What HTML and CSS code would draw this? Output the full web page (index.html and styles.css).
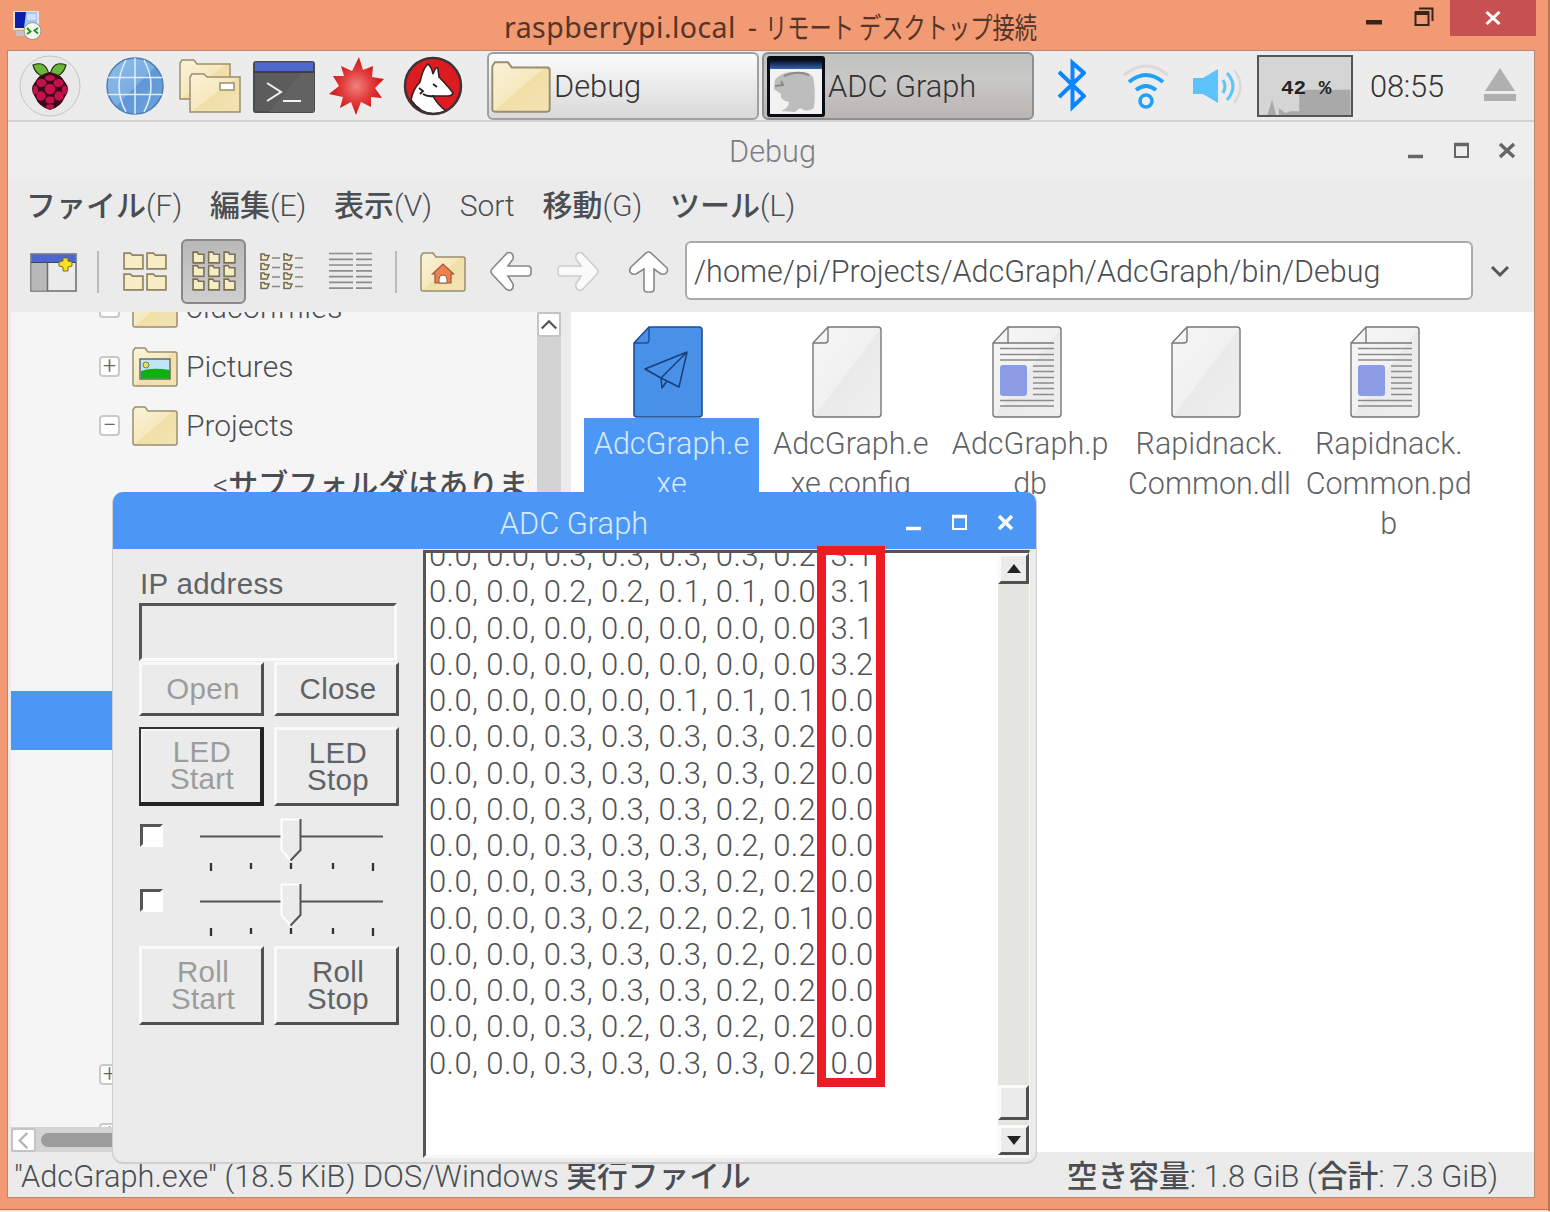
FILE: index.html
```html
<!DOCTYPE html>
<html lang="ja">
<head>
<meta charset="utf-8">
<title>raspberrypi.local - リモート デスクトップ接続</title>
<link rel="stylesheet" href="styles.css">
</head>
<body>
<svg class="defs" width="0" height="0">
  <defs>
    <linearGradient id="fold" x1="0" y1="0" x2="1" y2="1"><stop offset="0" stop-color="#faf3d8"/><stop offset=".5" stop-color="#f6e9bf"/><stop offset=".52" stop-color="#f1dfa6"/><stop offset="1" stop-color="#f3e4b4"/></linearGradient>
    <linearGradient id="paper" x1="0" y1="0" x2="1" y2="1"><stop offset="0" stop-color="#f6f6f6"/><stop offset=".5" stop-color="#f1f1f1"/><stop offset=".51" stop-color="#eaeaea"/><stop offset="1" stop-color="#efefef"/></linearGradient>
    <radialGradient id="burst"><stop offset="0" stop-color="#f08080"/><stop offset=".55" stop-color="#e23a3a"/><stop offset="1" stop-color="#d01414"/></radialGradient>
    <linearGradient id="sky" x1="0" y1="0" x2="1" y2="1"><stop offset="0" stop-color="#8fbdea"/><stop offset=".5" stop-color="#7bade2"/><stop offset=".52" stop-color="#5f97d6"/><stop offset="1" stop-color="#6fa3dc"/></linearGradient>
    <symbol id="folder" viewBox="0 0 46 40" preserveAspectRatio="none"><path d="M1 37V4L3 1H13L16 5H43Q45 5 45 7V37Q45 39 43 39H3Q1 39 1 37Z" fill="url(#fold)" stroke="#9a8e72" stroke-width="1.5"/></symbol>
    <symbol id="mini" viewBox="0 0 20 17" preserveAspectRatio="none"><path d="M1 16V1H7L9 3H19V16Z" fill="#f8ecc4" stroke="#8f8465" stroke-width="1.6"/></symbol>
    <symbol id="tiny" viewBox="0 0 12 12" preserveAspectRatio="none"><path d="M1 11V1H5L6 3H11V11Z" fill="#f8ecc4" stroke="#7a7057" stroke-width="1.5"/></symbol>
    <symbol id="micro" viewBox="0 0 10 8"><path d="M1 7V1H4L5 2.5H9L7 7Z" fill="#f8ecc4" stroke="#6f6755" stroke-width="1.5"/></symbol>
    <symbol id="page" viewBox="0 0 70 92"><path d="M1 17L16 1H66Q69 1 69 4V88Q69 91 66 91H4Q1 91 1 88Z" fill="url(#paper)" stroke="#777" stroke-width="1.4"/><path d="M1 17H13Q16 17 16 14V1" fill="none" stroke="#777" stroke-width="1.4"/></symbol>
    <symbol id="doc" viewBox="0 0 70 92"><path d="M1 17L16 1H66Q69 1 69 4V88Q69 91 66 91H4Q1 91 1 88Z" fill="url(#paper)" stroke="#777" stroke-width="1.4"/><path d="M1 17H62M16 17V1" fill="none" stroke="#777" stroke-width="1.4"/><path d="M8 22.500H62M8 28.500H62M8 34H62M41 40H62M41 45.500H62M41 51.500H62M41 57H62M41 62.500H62M41 68.500H62M8 74.500H62M8 80H62" stroke="#8b8b8b" stroke-width="1.7"/><rect x="8" y="39" width="27" height="31" rx="3" fill="#8c9ce4"/></symbol>
    <symbol id="runner" viewBox="0 0 70 92"><path d="M1 17L16 1H66Q69 1 69 4V88Q69 91 66 91H4Q1 91 1 88Z" fill="#4890e8" stroke="#1c4f92" stroke-width="1.6"/><path d="M1 17H13Q16 17 16 14V1" fill="none" stroke="#1c4f92" stroke-width="1.4"/><path d="M12 43L54 26L46 61L28 52ZM54 26L28 52L29 62L34 55" fill="none" stroke="#173f78" stroke-width="1.5" stroke-linejoin="round"/></symbol>
    <symbol id="arrow" viewBox="0 0 42 42"><path d="M2 18L17 2Q19 1 21 2Q24 4 23 8L18 15H38Q41 15 41 18V22Q41 25 38 25H18L23 33Q24 37 21 39Q19 40 16 38L2 23Q0 20 2 18Z" fill="#fff" stroke="currentColor" stroke-width="1.6"/></symbol>
    <symbol id="track" viewBox="0 0 200 65"><path d="M10 20.500H193" stroke="#555" stroke-width="2"/><path d="M91 3H111V34L101 45L91 34Z" fill="#ebebeb"/><path d="M91.500 34V3.500H111M91.500 34L101 45" fill="none" stroke="#fff" stroke-width="2"/><path d="M110.500 3V34L100.500 44.500" fill="none" stroke="#555" stroke-width="2"/><path d="M21 47V55M61 47V53M101 47V53M143 47V53M183 47V55" stroke="#333" stroke-width="2.300"/></symbol>
  </defs>
</svg>

<header class="rdp-title">
  <svg class="rdp-icon" viewBox="0 0 30 30"><rect x="1" y="0" width="26" height="19" rx="1" fill="#e6e2dc"/><rect x="3" y="1" width="22" height="16" fill="#a9c4f4"/><path d="M3 1H14L12 17H3Z" fill="#0a1fb0"/><path d="M15 3H24V9H15Z" fill="#cfe0ff"/><path d="M4 20H14V25H4Z" fill="#c7c3c9"/><circle cx="20.500" cy="20" r="8.500" fill="#f4f7f1" stroke="#8d9a86"/><path d="M15 17L18.500 20.500L15 23M26 17L22.500 19.500L26 22.500" fill="none" stroke="#2b8f22" stroke-width="2"/></svg>
  <h1><span class="t-en">raspberrypi.local -</span><span class="t-jp">リモート デスクトップ接続</span></h1>
  <div class="rdp-buttons">
    <svg class="rdp-min" viewBox="0 0 16 5"><rect width="16" height="4.500" fill="#3a231b"/></svg>
    <svg class="rdp-max" viewBox="0 0 20 20"><path d="M5 1.500H18.500V14" fill="none" stroke="#3a231b" stroke-width="2"/><path d="M1.500 5.500H14.500V18H1.500Z" fill="none" stroke="#3a231b" stroke-width="2"/><path d="M1 6H15" stroke="#3a231b" stroke-width="4"/></svg>
    <div class="rdp-close"><svg viewBox="0 0 16 14"><path d="M1.500 1L14.500 13M14.500 1L1.500 13" stroke="#fff" stroke-width="3"/></svg></div>
  </div>
</header>

<main class="desktop">
  <nav class="taskbar">
    <svg class="i-pi" viewBox="0 0 62 62"><circle cx="31" cy="31" r="30" fill="#e9e9e9" stroke="#c5c5c5"/><g stroke="#26330f" stroke-width="1.200" fill="#6cb63a"><path d="M30 20Q18 24 14 10Q27 5 30 20Z"/><path d="M31 20Q43 24 47 10Q34 5 31 20Z"/></g><path d="M31 17Q42 19 46 27Q52 34 46 42Q42 52 31 55Q20 52 16 42Q10 34 16 27Q20 19 31 17Z" fill="#3b0a1a"/><g fill="#c3124a"><ellipse cx="31" cy="23" rx="5" ry="3"/><ellipse cx="22.500" cy="28" rx="5" ry="4"/><ellipse cx="39.500" cy="28" rx="5" ry="4"/><circle cx="31" cy="34" r="5.200"/><ellipse cx="16.500" cy="35" rx="2.500" ry="4.500"/><ellipse cx="45.500" cy="35" rx="2.500" ry="4.500"/><circle cx="22" cy="41" r="4.700"/><circle cx="40" cy="41" r="4.700"/><ellipse cx="31" cy="45" rx="4.500" ry="3.500"/><ellipse cx="31" cy="51.500" rx="4" ry="2.300"/></g></svg>
    <svg class="i-web" viewBox="0 0 58 58"><circle cx="29" cy="29" r="28" fill="url(#sky)" stroke="#4a7fb8" stroke-width="1.500"/><path d="M29 1V57M2 20.500H56M2 37.500H56M20 3Q6 29 20 55M38 3Q52 29 38 55" fill="none" stroke="#dfeeff" stroke-width="1.500"/></svg>
    <svg class="i-files" viewBox="0 0 62 54"><path d="M1 40V4L3 1H15L18 5H51V40Z" fill="url(#fold)" stroke="#9a8e72" stroke-width="1.500"/><path d="M11 53V18L13 15H25L28 18H61V53Z" fill="url(#fold)" stroke="#9a8e72" stroke-width="1.500"/><rect x="41" y="24" width="14" height="7" fill="#fff" stroke="#9a8e72" stroke-width="1.500"/></svg>
    <svg class="i-term" viewBox="0 0 62 52"><rect x="1" y="1" width="60" height="50" rx="2" fill="#5c5c5c" stroke="#4a4a52" stroke-width="2"/><path d="M61 10H50L16 51H61Z" fill="#626262"/><rect x="2" y="1.500" width="58" height="9" fill="#4e68cc"/><path d="M1 11H61" stroke="#333" stroke-width="1.500"/><path d="M14 22L28 31L14 40M30 40H48" fill="none" stroke="#f2f2f2" stroke-width="2"/></svg>
    <svg class="i-burst" viewBox="0 0 56 58"><path d="M30 0L34 13L44 9L43 20L55 22L46 31L53 41L42 40L42 50L32 45L27 58L22 45L11 51L14 40L0 37L10 29L4 19L15 19L12 9L23 14Z" fill="url(#burst)"/></svg>
    <svg class="i-wolf" viewBox="0 0 60 60"><circle cx="30" cy="30" r="28" fill="#dd1c22"/><path d="M8 44Q10 33 17 26Q20 12 25 8Q29 12 30 18Q33 9 35 13L36 21Q40 25 47 33L50 37Q49 40 45 40L30 40Q34 48 43 55Q22 64 8 44Z" fill="#fff" stroke="#332022" stroke-width="1.600"/><path d="M16 32L20 35L17 38M30 28L34 31M20 38Q24 41 31 40" fill="none" stroke="#222" stroke-width="1.800"/><circle cx="30" cy="30" r="28" fill="none" stroke="#3c3335" stroke-width="2.500"/></svg>
    <div class="task"><svg class="task-folder"><use href="#folder"/></svg><span>Debug</span></div>
    <div class="task task-on"><svg class="task-app" viewBox="0 0 58 61"><defs><linearGradient id="bar" x1="0" y1="0" x2="0" y2="1"><stop offset="0" stop-color="#050a18"/><stop offset="1" stop-color="#3563b4"/></linearGradient></defs><rect width="58" height="61" rx="3" fill="#080c14"/><rect x="3" y="4" width="52" height="9" fill="url(#bar)"/><rect x="3" y="13" width="52" height="45" fill="#f2f2f2"/><path d="M8 24Q14 16 26 16Q42 15 46 21Q49 34 47 52Q40 57 33 52L28 56L14 55Q22 52 22 46Q12 44 14 38L7 33Z" fill="#bdbdbd"/><path d="M17 20Q30 14 42 19M8 30L16 29L14 25" stroke="#8a8a8a" stroke-width="2" fill="none"/></svg><span>ADC Graph</span></div>
    <svg class="i-bt" viewBox="0 0 28 54"><path d="M1 14L26 38L14.500 49V5L26 15L1 39" fill="none" stroke="#0a84ff" stroke-width="4"/></svg>
    <svg class="i-wifi" viewBox="0 0 48 46"><path d="M2 11Q24 -7 46 11" fill="none" stroke="#dfdad8" stroke-width="3"/><path d="M7 18Q24 4 41 18" fill="none" stroke="#1fa2f5" stroke-width="4"/><path d="M14 26Q24 18 34 26" fill="none" stroke="#1fa2f5" stroke-width="4"/><circle cx="24" cy="37" r="6" fill="#eee" stroke="#1fa2f5" stroke-width="3.500"/></svg>
    <svg class="i-vol" viewBox="0 0 50 38"><path d="M0 11H10L25 2V36L10 27H0Z" fill="#5cc4fb"/><path d="M30 13Q34 19 30 26M34 6Q46 19 34 33" fill="none" stroke="#5cc4fb" stroke-width="3"/><path d="M41 3Q54 19 41 36" fill="none" stroke="#dcdad8" stroke-width="2.500"/></svg>
    <div class="cpu"><svg viewBox="0 0 94 60"><path d="M8 60L13 44L17 60ZM20 60V53L27 58L32 56H41V37L48 34H94V60Z" fill="#a9a9a9"/></svg><span>42 <b>%</b></span></div>
    <time>08:55</time>
    <svg class="i-eject" viewBox="0 0 32 34"><path d="M16 0L31 23H1ZM0 26H32V33H0Z" fill="#b0b0b0"/></svg>
  </nav>

  <section class="fm">
    <div class="fm-title">
      <h2>Debug</h2>
      <div class="winbtns"><svg viewBox="0 0 108 18"><path d="M0 14.500H15" stroke="#666" stroke-width="3.500"/><path d="M47 3H60V15H47Z" fill="none" stroke="#666" stroke-width="2"/><path d="M46 2.500H61" stroke="#666" stroke-width="3.500"/><path d="M92 2L106 15M106 2L92 15" stroke="#666" stroke-width="3.500"/></svg></div>
    </div>
    <div class="menu">
      <span><b>ファイル</b>(F)</span><span><b>編集</b>(E)</span><span><b>表示</b>(V)</span><span class="m-sort">Sort</span><span><b>移動</b>(G)</span><span><b>ツール</b>(L)</span>
    </div>
    <div class="tools">
      <svg class="b-new" viewBox="0 0 48 39"><rect x="1" y="1" width="45" height="37" fill="#ececec" stroke="#6b6b6b" stroke-width="1.500"/><rect x="1.500" y="1.500" width="44" height="8" fill="#4c68d0"/><rect x="1.500" y="9.500" width="16" height="28" fill="#b9b9b9"/><path d="M17.500 9V38" stroke="#6b6b6b" stroke-width="1.500"/><path d="M1 9.500H46" stroke="#445" stroke-width="1"/><path d="M33 5H38V8L42 9V13L38 14V18H33V14L29 13V9L33 8Z" fill="#f8e11e" stroke="#7d700f" stroke-width="1"/></svg>
      <i class="sep"></i>
      <svg class="b-big" viewBox="0 0 44 40"><use href="#mini" x="0" y="0" width="21" height="18"/><use href="#mini" x="23" y="0" width="21" height="18"/><use href="#mini" x="0" y="21" width="21" height="18"/><use href="#mini" x="23" y="21" width="21" height="18"/></svg>
      <div class="pressed"><svg viewBox="0 0 44 40"><use href="#tiny" x="0" y="0" width="13" height="13"/><use href="#tiny" x="15.500" y="0" width="13" height="13"/><use href="#tiny" x="31" y="0" width="13" height="13"/><use href="#tiny" x="0" y="13.500" width="13" height="13"/><use href="#tiny" x="15.500" y="13.500" width="13" height="13"/><use href="#tiny" x="31" y="13.500" width="13" height="13"/><use href="#tiny" x="0" y="27" width="13" height="13"/><use href="#tiny" x="15.500" y="27" width="13" height="13"/><use href="#tiny" x="31" y="27" width="13" height="13"/></svg></div>
      <svg class="b-list" viewBox="0 0 44 38"><g><use href="#micro" width="10" height="8"/><use href="#micro" y="9.500" width="10" height="8"/><use href="#micro" y="19" width="10" height="8"/><use href="#micro" y="28.500" width="10" height="8"/><use href="#micro" x="23" width="10" height="8"/><use href="#micro" x="23" y="9.500" width="10" height="8"/><use href="#micro" x="23" y="19" width="10" height="8"/><use href="#micro" x="23" y="28.500" width="10" height="8"/></g><path d="M12 5H20M12 14.500H20M12 24H20M12 33.500H20M35 5H43M35 14.500H43M35 24H43M35 33.500H43" stroke="#888" stroke-width="1.500"/></svg>
      <svg class="b-det" viewBox="0 0 44 38"><path d="M0 1.500H24M27 1.500H43M0 7.300H24M27 7.300H43M0 13H24M27 13H43M0 18.800H24M27 18.800H43M0 24.600H24M27 24.600H43M0 30.400H24M27 30.400H43M0 36.200H24M27 36.200H43" stroke="#8c8c8c" stroke-width="1.700"/></svg>
      <i class="sep sep2"></i>
      <svg class="b-home" viewBox="0 0 46 40"><use href="#folder" width="46" height="40"/><path d="M12.500 22L23 12L33.500 22H31V31H15V22Z" fill="#f0814f" stroke="#99583c" stroke-width="1.200"/><path d="M19 31V27Q19 23 23 23Q27 23 27 27V31Z" fill="#fff" stroke="#8b5a45" stroke-width="1"/></svg>
      <svg class="b-back"><use href="#arrow"/></svg>
      <svg class="b-fwd"><use href="#arrow"/></svg>
      <svg class="b-up"><use href="#arrow"/></svg>
      <div class="path">/home/pi/Projects/AdcGraph/AdcGraph/bin/Debug</div>
      <svg class="b-drop" viewBox="0 0 20 14"><path d="M2 2L10 10L18 2" fill="none" stroke="#555" stroke-width="3"/></svg>
    </div>

    <div class="panes">
      <aside class="tree">
        <div class="tree-main">
          <ul>
            <li><i class="exp">−</i><svg class="dir"><use href="#folder"/></svg>oldconffiles</li>
            <li><i class="exp">+</i><svg class="dir" viewBox="0 0 46 40"><use href="#folder" width="46" height="40"/><rect x="8" y="12" width="30" height="20" fill="#bfe6f8" stroke="#555" stroke-width="1.300"/><circle cx="14" cy="18" r="3" fill="#e8e24a" stroke="#777"/><path d="M9 24Q20 20 38 23V31.500H9Z" fill="#10b010"/></svg>Pictures</li>
            <li><i class="exp">−</i><svg class="dir"><use href="#folder"/></svg>Projects</li>
            <li class="none">&lt;<b>サブフォルダはありません</b>&gt;</li>
            <li></li><li></li><li></li>
            <li class="sel"></li>
            <li></li><li></li><li></li><li></li><li></li>
            <li><i class="exp">+</i></li>
            <li><i class="exp">+</i></li>
          </ul>
          <div class="hbar"><span class="hbtn"><svg viewBox="0 0 22 22"><path d="M15 3L7 11L15 19" fill="none" stroke="#b5b5b5" stroke-width="2.500"/></svg></span><span class="hthumb"></span></div>
        </div>
        <div class="vbar"><span><svg viewBox="0 0 22 24"><path d="M3 16L11 8L19 16" fill="none" stroke="#555" stroke-width="2.500"/></svg></span></div>
      </aside>
      <div class="files">
        <figure class="on"><svg><use href="#runner"/></svg><figcaption>AdcGraph.e<br>xe</figcaption></figure>
        <figure><svg><use href="#page"/></svg><figcaption>AdcGraph.e<br>xe.config</figcaption></figure>
        <figure><svg><use href="#doc"/></svg><figcaption>AdcGraph.p<br>db</figcaption></figure>
        <figure><svg><use href="#page"/></svg><figcaption>Rapidnack.<br>Common.dll</figcaption></figure>
        <figure><svg><use href="#doc"/></svg><figcaption>Rapidnack.<br>Common.pd<br>b</figcaption></figure>
      </div>
    </div>
    <footer><span class="s-left">"AdcGraph.exe" (18.5 KiB) DOS/Windows <b>実行ファイル</b></span><span class="s-right"><b>空き容量</b>: 1.8 GiB (<b>合計</b>: 7.3 GiB)</span></footer>
  </section>
</main>

<section class="adc">
  <div class="adc-title"><h2>ADC Graph</h2><svg viewBox="0 0 108 18"><path d="M0 14.500H15" stroke="#fff" stroke-width="3.500"/><path d="M47 3H60V15H47Z" fill="none" stroke="#fff" stroke-width="2"/><path d="M46 2.500H61" stroke="#fff" stroke-width="3.500"/><path d="M93 2L106 15M106 2L93 15" stroke="#fff" stroke-width="3.500"/></svg></div>
  <div class="adc-body">
    <div class="panel">
      <label>IP address</label>
      <div class="ip"></div>
      <div class="btns b1"><div class="btn off">Open</div><div class="btn">Close</div></div>
      <div class="btns b2"><div class="btn off focus">LED<br>Start</div><div class="btn">LED<br>Stop</div></div>
      <div class="slide"><i></i><svg><use href="#track"/></svg></div>
      <div class="slide"><i></i><svg><use href="#track"/></svg></div>
      <div class="btns b2"><div class="btn off">Roll<br>Start</div><div class="btn">Roll<br>Stop</div></div>
    </div>
    <div class="log">
      <pre>0.0, 0.0, 0.3, 0.3, 0.3, 0.3, 0.2, 3.1
0.0, 0.0, 0.2, 0.2, 0.1, 0.1, 0.0, 3.1
0.0, 0.0, 0.0, 0.0, 0.0, 0.0, 0.0, 3.1
0.0, 0.0, 0.0, 0.0, 0.0, 0.0, 0.0, 3.2
0.0, 0.0, 0.0, 0.0, 0.1, 0.1, 0.1, 0.0
0.0, 0.0, 0.3, 0.3, 0.3, 0.3, 0.2, 0.0
0.0, 0.0, 0.3, 0.3, 0.3, 0.3, 0.2, 0.0
0.0, 0.0, 0.3, 0.3, 0.3, 0.2, 0.2, 0.0
0.0, 0.0, 0.3, 0.3, 0.3, 0.2, 0.2, 0.0
0.0, 0.0, 0.3, 0.3, 0.3, 0.2, 0.2, 0.0
0.0, 0.0, 0.3, 0.2, 0.2, 0.2, 0.1, 0.0
0.0, 0.0, 0.3, 0.3, 0.3, 0.2, 0.2, 0.0
0.0, 0.0, 0.3, 0.3, 0.3, 0.2, 0.2, 0.0
0.0, 0.0, 0.3, 0.2, 0.3, 0.2, 0.2, 0.0
0.0, 0.0, 0.3, 0.3, 0.3, 0.3, 0.2, 0.0</pre>
      <div class="scroll">
        <span class="sb-up"><svg viewBox="0 0 16 9"><path d="M8 0L15 9H1Z" fill="#222"/></svg></span>
        <span class="sb-thumb"></span>
        <span class="sb-down"><svg viewBox="0 0 16 9"><path d="M8 9L15 0H1Z" fill="#222"/></svg></span>
      </div>
    </div>
  </div>
  <div class="mark"></div>
</section>
</body>
</html>
```
FILE: styles.css
```css
* { box-sizing: border-box; }
body { margin: 0; width: 1550px; height: 1212px; overflow: hidden; background: #f19a74; position: relative; font: 300 30px/36px Roboto, "Noto Sans CJK JP", sans-serif; color: #4a4e52; border-right: 2px solid #b9714f; border-bottom: 2px solid #fbe3d8; box-shadow: inset 0 -1px #b9714f; }
svg { display: block; flex: none; }
.defs { position: absolute; }
h1, h2, ul, figure, pre { margin: 0; padding: 0; font: inherit; }
b { font-weight: 500; }
i { font-style: normal; }

.rdp-title { height: 51px; display: flex; align-items: flex-start; }
.rdp-icon { width: 30px; height: 30px; margin: 11px 0 0 12px; }
.rdp-title h1 { display: flex; margin: 7px 0 0 462px; height: 40px; line-height: 40px; color: #553527; white-space: nowrap; }
.t-en { width: 261px; font: 400 28.500px/40px "Noto Sans", sans-serif; letter-spacing: .45px; word-spacing: 4px; }
.t-jp { width: 272px; font: 400 29px/38px "Noto Sans CJK JP", sans-serif; transform: scaleX(.767); transform-origin: 0 50%; }
.rdp-buttons { display: flex; margin-left: auto; }
.rdp-min { width: 16px; height: 5px; margin: 20px 32px 0 0; }
.rdp-max { width: 20px; height: 20px; margin: 7px 16px 0 0; }
.rdp-close { width: 86px; height: 36px; margin-right: 12px; background: #c75050; display: grid; place-items: center; }
.rdp-close svg { width: 16px; height: 14px; }

.desktop { margin-left: 8px; width: 1526px; height: 1146px; background: #ebebeb; box-shadow: 0 0 0 1px #b98a72; }
.taskbar { height: 71px; display: flex; align-items: flex-start; border-bottom: 2px solid #d2d2d2; background: #ececec; color: #333; font-size: 30.800px; }
.i-pi { width: 62px; height: 62px; margin: 4px 0 0 11px; }
.i-web { width: 58px; height: 58px; margin: 6px 0 0 25px; }
.i-files { width: 62px; height: 54px; margin: 8px 0 0 15px; }
.i-term { width: 62px; height: 52px; margin: 10px 0 0 12px; }
.i-burst { width: 56px; height: 58px; margin: 6px 0 0 14px; }
.i-wolf { width: 60px; height: 60px; margin: 5px 0 0 18px; }
.task { width: 272px; height: 68px; margin: 1px 0 0 24px; border: 2px solid #a0a0a0; border-radius: 6px; background: linear-gradient(#fbfbfb, #ededed 40%, #d9d9d9); display: flex; align-items: center; white-space: nowrap; }
.task span { padding-top: 2px; }
.task-on { margin-left: 3px; background: linear-gradient(#c2c1bf, #c8c8c6 40%, #b9b5b2); border-color: #8f8f8f; }
.task-folder { width: 60px; height: 52px; margin: 1px 3px 0 2px; }
.task-app { width: 60px; height: 61px; margin: 0 2px 0 2px; }
.i-bt { width: 28px; height: 54px; margin: 7px 0 0 24px; }
.i-wifi { width: 48px; height: 46px; margin: 13px 0 0 36px; }
.i-vol { width: 50px; height: 38px; margin: 16px 0 0 23px; }
.cpu { width: 96px; height: 62px; margin: 4px 0 0 14px; border: 2px solid #555; background: #d5d5d5; display: grid; }
.cpu svg, .cpu span { grid-area: 1 / 1; }
.cpu span { font: 700 21px/63px "Liberation Mono", monospace; color: #222; padding-left: 22px; }
.cpu b { font-weight: 700; }
.cpu svg { width: 92px; height: 58px; }
.taskbar time { margin: 18px 0 0 17px; width: 75px; letter-spacing: -.2px; }
.i-eject { width: 32px; height: 34px; margin: 17px 0 0 39px; }

.fm { display: flex; flex-direction: column; height: 1075px; }
.fm-title { height: 58px; display: flex; align-items: center; position: relative; background: #eee; color: #7b7f83; font-size: 30.700px; }
.fm-title h2 { flex: 1; text-align: center; padding: 2px 0 0 3px; }
.winbtns { position: absolute; right: 18px; top: 20px; width: 108px; }
.winbtns svg, .adc-title svg { width: 108px; height: 18px; }
.menu { height: 52px; display: flex; align-items: center; gap: 27.700px; padding-left: 18px; white-space: nowrap; }
.tools { height: 80px; display: flex; align-items: center; }
.b-new { width: 48px; height: 39px; margin-left: 22px; }
.sep { width: 2px; height: 42px; background: #bcbcbc; margin-left: 19px; }
.b-big { width: 44px; height: 40px; margin-left: 24px; }
.pressed { width: 65px; height: 65px; margin: -2px 0 0 14px; border: 2px solid #888; border-radius: 6px; background: linear-gradient(#b9b9b9, #cfcfcf); display: grid; place-items: center; }
.pressed svg { width: 44px; height: 40px; }
.b-list { width: 44px; height: 38px; margin-left: 14px; }
.b-det { width: 44px; height: 38px; margin: -2px 0 0 25px; }
.sep2 { margin-left: 22px; }
.b-home { width: 46px; height: 40px; margin-left: 23px; }
.b-back, .b-fwd, .b-up { width: 42px; height: 42px; color: #888; }
.b-back { margin-left: 24px; }
.b-fwd { margin-left: 25px; transform: scaleX(-1); color: #c4c4c4; }
.b-fwd use { opacity: .75; }
.b-up { margin-left: 28px; transform: rotate(90deg); }
.path { width: 788px; height: 59px; margin: -3px 0 0 16px; border: 2px solid #aaa; border-radius: 6px; background: #fff; padding-left: 7px; line-height: 58px; white-space: nowrap; font-size: 30.500px; }
.b-drop { width: 20px; height: 14px; margin-left: 17px; }

.panes { height: 840px; display: flex; }
.tree { width: 563px; padding-left: 3px; display: flex; background: #ebebeb; }
.tree-main { width: 526px; background: #f5f5f5; overflow: hidden; display: flex; flex-direction: column; }
.tree ul { list-style: none; height: 815px; overflow: hidden; display: flex; flex-direction: column; margin-right: 8px; }
.tree li { height: 59px; flex: none; display: flex; align-items: center; white-space: nowrap; padding-left: 88px; }
.tree li:first-child { margin-top: -34px; letter-spacing: .3px; }
.tree .none { padding-left: 202px; }
.tree .sel { background: #4c97f5; }
.exp { width: 21px; height: 21px; border: 2px solid #c9c9c9; border-radius: 4px; background: #fff; line-height: 16px; font-size: 24px; text-align: center; color: #666; display: block; }
.dir { width: 46px; height: 40px; margin: 0 8px 0 12px; }
.hbar { height: 25px; background: #d4d4d4; display: flex; align-items: center; gap: 5px; }
.hbtn { width: 25px; height: 24px; border: 2px solid #c4c4c4; border-radius: 3px; background: #fff; }
.hthumb { flex: 1; height: 14px; border-radius: 7px; background: #9d9d9d; }
.vbar { width: 24px; background: #d3d3d3; }
.vbar span { display: block; height: 25px; background: #fff; border: 2px solid #c4c4c4; border-radius: 3px; }
.files { flex: 1; background: #fff; display: flex; padding: 14px 0 0 7px; font-size: 30.500px; }
.files figure { width: 179.300px; padding-left: 2px; display: flex; flex-direction: column; }
.files figure svg { width: 70px; height: 92px; margin-left: 53px; }
.files figcaption { width: 175px; margin-left: 4px; line-height: 40px; padding-top: 6px; text-align: center; color: #5f6265; white-space: nowrap; }
.files .on figcaption { background: #4c97f5; color: #d9e9ff; }
footer { height: 45px; display: flex; justify-content: space-between; padding: 7px 36px 0 6px; white-space: nowrap; font-size: 30.750px; }

.adc { position: absolute; left: 113px; top: 492px; width: 923px; height: 670px; background: #ebebeb; border-radius: 10px; box-shadow: 0 1px 0 1px #cfcfcf; font: 400 29.500px/36px "Liberation Sans", sans-serif; }
.adc-title { height: 57px; border-radius: 10px 10px 0 0; background: #4c97f5; color: #d9e9ff; display: flex; align-items: center; font: 300 30.800px/36px Roboto, sans-serif; }
.adc-title h2 { width: 793px; padding: 6px 0 0 129px; text-align: center; }
.adc-title svg { margin: 4px 0 0 0; }
.adc-body { display: flex; height: 613px; }
.panel { width: 310px; padding: 17px 0 0 26px; color: #606366; letter-spacing: .3px; }
.panel label { display: block; padding-left: 1px; height: 36px; }
.ip { width: 258px; height: 58px; margin: 1px 0; border: 3px solid; border-color: #555 #fafafa #fafafa #555; }
.btns { display: flex; gap: 10px; margin-bottom: 10px; }
.btn { width: 125px; display: grid; place-items: center; align-content: center; text-align: center; line-height: 27px; border: 3px solid; border-color: #fafafa #505050 #505050 #fafafa; padding: 0 0 2px 3px; }
.b1 { margin-bottom: 11px; }
.b1 .btn { height: 54px; }
.b2 .btn { height: 79px; }
.panel .off { color: #9c9c9c; }
.btn.focus { border-color: #333 #222 #222 #333; border-width: 2px 4px 4px 2px; box-shadow: inset 2px 2px #f6f6f6; }
.slide { height: 65px; display: flex; }
.slide i { width: 23px; height: 23px; margin: 8px 27px 0 1px; background: #fff; border: 3px solid; border-color: #555 #fff #fff #555; }
.slide svg { width: 200px; height: 65px; }
.log { width: 607px; height: 608px; margin-top: 1px; border: 3px solid; border-color: #555 #f8f8f8 #f8f8f8 #555; border-right-width: 1px; background: #fff; display: flex; justify-content: space-between; overflow: hidden; }
.log pre { margin: -15px 0 0 3px; font: 300 31px/36.250px Roboto, sans-serif; letter-spacing: .41px; color: #505356; }
.scroll { width: 31px; display: flex; flex-direction: column; background: #e5e5e1; }
.scroll span { display: grid; place-items: center; background: #ebebeb; border: 3px solid; border-color: #fafafa #505050 #505050 #fafafa; }
.scroll svg { width: 16px; height: 9px; }
.sb-up { height: 31px; }
.sb-thumb { height: 35px; margin-top: auto; }
.sb-down { height: 30px; margin-top: 5px; }
.mark { position: absolute; left: 704px; top: 54px; width: 68px; height: 541px; border: 9px solid #ed1c24; }
```
